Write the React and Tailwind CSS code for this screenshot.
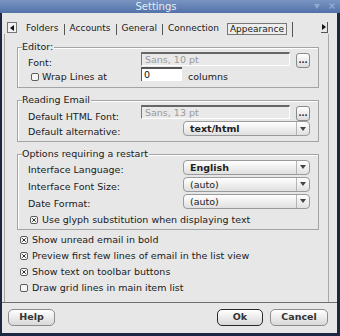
import React from 'react';

// small Qt-style checkbox, X mark when checked
const Check = ({ checked }) => (
    <svg width="8" height="8" viewBox="0 0 8 8" className="shrink-0">
        <rect x="0.5" y="0.5" width="7" height="7" rx="1.5" fill="#f6f6f6" stroke="#5e5e5e" />
        {checked && <path d="M2.2 2.2 L5.8 5.8 M5.8 2.2 L2.2 5.8" stroke="#333" strokeWidth="1" />}
    </svg>
);

const Select = ({ value, bold, className = '' }) => (
    <div className={`flex h-[15px] items-stretch rounded-[4px] border border-[#9a9a9a] bg-linear-to-b from-white to-[#e0e0e0] ${className}`}>
        <span className={`flex-1 pl-[6px] leading-[13px] text-[#222] ${bold ? 'font-bold' : ''}`}>{value}</span>
        <span className="flex w-[13px] items-center justify-center border-l border-[#b4b4b4]">
            <svg width="6" height="4" viewBox="0 0 6 4"><path d="M0 0 H6 L3 4Z" fill="#444" /></svg>
        </span>
    </div>
);

const DotsButton = ({ className = '' }) => (
    <div className={`flex h-[15px] w-[14px] items-center justify-center rounded-[3px] border border-[#8a8a8a] bg-linear-to-b from-white to-[#dcdcdc] ${className}`}>
        <span className="text-[8px] font-bold leading-[8px] text-[#222]">...</span>
    </div>
);

const DisabledField = ({ text, className = '' }) => (
    <div className={`h-[14px] border-t-2 border-l border-b border-r border-t-[#666] border-l-[#777] border-b-white border-r-white bg-[#e9e9e9] pl-[3px] leading-[11px] text-[#9a9a9a] ${className}`}>
        {text}
    </div>
);

const Group = ({ title, children, className = '' }) => (
    <fieldset className={`ml-[12px] w-[302px] border border-[#a4a4a4] shadow-[inset_1px_1px_0_#fff] ${className}`}>
        <legend className="ml-[4px] bg-[#e7e7e7] pr-[1px] leading-[10px] text-[#1a1a1a]">{title}</legend>
        <div className="pl-[10px] pr-[5px]">{children}</div>
    </fieldset>
);

const Label = ({ children, className = '' }) => (
    <span className={`pt-[6px] leading-[10px] text-[#1a1a1a] ${className}`}>{children}</span>
);

const Button = ({ children, primary, className = '' }) => (
    <div className={`flex h-[17px] items-center justify-center rounded-[5px] bg-linear-to-b from-white to-[#d8d8d8] font-bold text-[#333] ${primary ? 'border-[1.5px] border-[#2a2a2a]' : 'border border-[#8c8c8c]'} ${className}`}>
        {children}
    </div>
);

const TabSep = () => <span className="h-[11px] w-px bg-[#555]" />;

export default function App() {
    return (
        <div className="flex h-[336px] w-[340px] flex-col bg-[#1c2741] font-['DejaVu_Sans',sans-serif] text-[9.5px]">
            {/* title bar */}
            <div className="relative flex h-[13px] items-center justify-center bg-linear-to-b from-[#7a95c2] to-[#5272a8] pr-[28px]">
                <span className="text-[10px] leading-[10px] text-[#e6ecf5]">Settings</span>
                <svg className="absolute right-[20px] top-[4px]" width="6" height="5" viewBox="0 0 6 5">
                    <path d="M0 0 H6 L3 5Z" fill="#8ea9d2" />
                </svg>
                <svg className="absolute right-[5px] top-[3px]" width="6" height="6" viewBox="0 0 6 6">
                    <path d="M0.5 0.5 L5.5 5.5 M5.5 0.5 L0.5 5.5" stroke="#8ea9d2" strokeWidth="1.4" />
                </svg>
            </div>

            <div className="mb-[3px] ml-[2px] mr-[3px] flex flex-1 flex-col bg-[#e7e7e7]">
                {/* tabs */}
                <div className="flex h-[21px] items-center pt-[8px] text-[9px] text-[#1a1a1a]">
                    <div className="ml-[5px] flex h-[11px] w-[10px] items-center justify-center border border-[#777] bg-[#f2f2f2]">
                        <svg width="4" height="6" viewBox="0 0 4 6"><path d="M4 0 V6 L0 3Z" fill="#111" /></svg>
                    </div>
                    <div className="ml-[9px] flex items-center gap-[5px] pt-[3px]">
                        <span>Folders</span>
                        <TabSep />
                        <span>Accounts</span>
                        <TabSep />
                        <span>General</span>
                        <TabSep />
                        <span>Connection</span>
                        <span className="ml-[3px] border border-[#777] bg-[#ededed] px-[2px] leading-[10px]">Appearance</span>
                        <span className="h-[15px] w-px bg-[#555]" />
                    </div>
                    <div className="ml-auto mr-[9px] flex h-[11px] w-[7px] items-center justify-center border-b border-r border-[#555]">
                        <svg width="4" height="6" viewBox="0 0 4 6"><path d="M0 0 V6 L4 3Z" fill="#111" /></svg>
                    </div>
                </div>

                {/* tab page */}
                <div className="ml-[2px] flex w-[325px] flex-1 flex-col border-l border-r border-[#a8a8a8]">
                    <Group title="Editor:" className="mt-[8px] pb-[6px]">
                        <div className="flex h-[15px] items-start">
                            <Label className="w-[113px] pt-[5px]">Font:</Label>
                            <DisabledField text="Sans, 10 pt" className="w-[149px]" />
                            <DotsButton className="ml-[6px] mt-[1px]" />
                        </div>
                        <div className="flex h-[14px] items-center">
                            <div className="flex w-[113px] items-center gap-[3px] pl-[3px] pt-[6px]">
                                <Check />
                                <span className="leading-[10px] text-[#1a1a1a]">Wrap Lines at</span>
                            </div>
                            <div className="h-[14px] w-[41px] border-t-2 border-l border-[#555] bg-white pl-[2px] leading-[11px] text-[#111]">0</div>
                            <Label className="ml-[6px]">columns</Label>
                        </div>
                    </Group>

                    <Group title="Reading Email" className="mt-[7px] pb-[5px]">
                        <div className="flex h-[15px] items-start">
                            <Label className="w-[113px] pt-[7px]">Default HTML Font:</Label>
                            <DisabledField text="Sans, 13 pt" className="w-[149px]" />
                            <DotsButton className="ml-[6px] mt-[1px]" />
                        </div>
                        <div className="mt-[1px] flex h-[15px] items-center">
                            <Label className="w-[155px]">Default alternative:</Label>
                            <Select value="text/html" bold className="w-[127px]" />
                        </div>
                    </Group>

                    <Group title="Options requiring a restart" className="mt-[7px] pb-[2px]">
                        <div className="flex flex-col gap-[1px]">
                            <div className="flex items-center">
                                <Label className="w-[155px]">Interface Language:</Label>
                                <Select value="English" bold className="w-[127px]" />
                            </div>
                            <div className="flex items-center">
                                <Label className="w-[155px]">Interface Font Size:</Label>
                                <Select value="(auto)" className="w-[127px]" />
                            </div>
                            <div className="flex items-center">
                                <Label className="w-[155px]">Date Format:</Label>
                                <Select value="(auto)" className="w-[127px]" />
                            </div>
                        </div>
                        <div className="mt-[4px] flex h-[14px] items-center gap-[4px] pl-[2px]">
                            <Check checked />
                            <span className="leading-[10px] text-[#1a1a1a]">Use glyph substitution when displaying text</span>
                        </div>
                    </Group>

                    <div className="mt-[2px] flex flex-col pl-[15px] text-[#1a1a1a]">
                        {[
                            ['Show unread email in bold', true],
                            ['Preview first few lines of email in the list view', true],
                            ['Show text on toolbar buttons', true],
                            ['Draw grid lines in main item list', false],
                        ].map(([text, checked]) => (
                            <div key={text} className="flex h-[16px] items-center gap-[4px]">
                                <Check checked={checked} />
                                <span className="leading-[10px]">{text}</span>
                            </div>
                        ))}
                    </div>
                </div>

                <div className="h-px bg-[#6e6e6e]" />

                {/* dialog buttons */}
                <div className="flex h-[30px] items-start pt-[6px]">
                    <Button className="ml-[6px] w-[47px]">Help</Button>
                    <Button primary className="ml-auto w-[46px]">Ok</Button>
                    <Button className="ml-[7px] mr-[9px] w-[58px]">Cancel</Button>
                </div>
            </div>
        </div>
    );
}
